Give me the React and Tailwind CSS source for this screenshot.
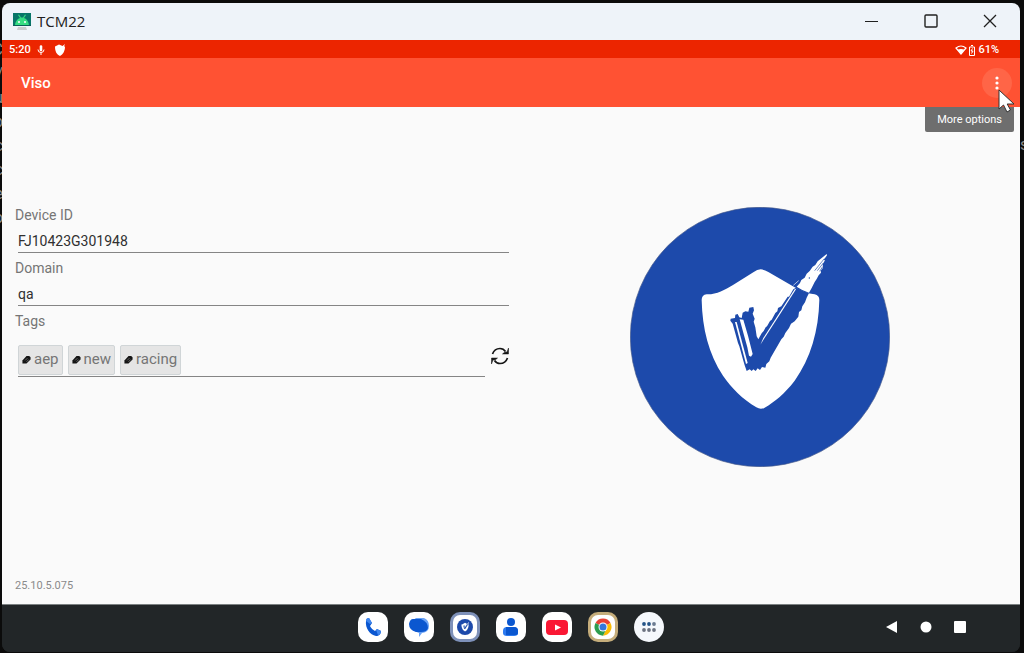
import React from 'react'

const TAGS = ['aep', 'new', 'racing']
const LINES = ['C', '/', 'u', 'b', 'c', 'c', 'e', 'o']

const SHIELD =
  'M418 206 Q430 207 441 214 L520 260 Q550 279 580 281 Q594 284 594 298 C592 390 568 473 520 540 C490 579 460 603 430 621 Q418 628 405 620 C365 596 330 562 305 525 C262 460 243 385 241 298 Q241 283 256 281 C285 282 310 268 335 253 L396 215 Q408 206 418 206Z'

const VisoLogo = ({ className }) => (
  <svg viewBox="26 19 780 780" className={className} role="img" aria-label="Viso">
    <circle cx="416" cy="409" r="389" fill="#1d4aab" stroke="#45598a" strokeWidth="2" />
    <path d={SHIELD} fill="#fff" />
    <path
      d="M411 416 L421 398 427 391 433 380 437 377 446 361 451 357 462 337 468 332 470 322 480 317 499 288 503 288 516 266 524 261 Q544 272 563 277 L556 291 551 305 543 317 540 329 533 334 531 348 520 362 509 369 503 382 492 397 487 408 480 416 448 471 444 482 435 490 432 501 422 499 416 508 409 503 403 511 396 506 391 511 385 506 376 511 370 494 366 480 354 437 350 427 334 369 327 360 328 354 341 352 342 342 349 340 354 350 361 352 364 336 372 332 381 333 384 321 396 319 398 329 394 339 400 354 397 363 402 380 406 407Z"
      fill="#1d4aab"
    />
    <path d="M341 364 L346 364 379 487 374 490Z" fill="#fff" />
    <path d="M355 356 L366 357 380 405 394 460 389 468 383 465 378 440 368 404Z" fill="#fff" />
    <path d="M417 432 L426 412 520 266 525 264 475 342Z" fill="#fff" />
    <path
      d="M526 258 L536 247 540 238 550 231 556 219 565 211 574 198 582 193 589 182 616 160 617 164 607 178 611 179 604 191 605 201 598 210 599 216 592 224 586 235 580 244 571 262 563 276 Q545 271 526 258Z"
      fill="#fff"
    />
    <path d="M580 210 L609 174 M588 210 L606 187 M595 212 L604 198" stroke="#1d4aab" strokeWidth="2" />
    <path d="M516 254 L532 240" stroke="#fff" strokeWidth="2" />
    <circle cx="564" cy="232" r="2" fill="#1d4aab" />
  </svg>
)

const TitleBar = () => (
  <header className="flex h-[37px] items-center bg-[#eef3f9] pb-px pl-[11px] text-[#202020]">
    <svg viewBox="0 0 18 18" className="h-[18px] w-[18px]" aria-hidden="true">
      <path d="M0 1h18v13H0z" fill="#087568" />
      <path d="M2 14c0-4 2-7 5-8L5 3l1-.5 2 3h2l2-3 1 .5-2 3c3 1 5 4 5 8z" fill="#36dc82" />
      <circle cx="6" cy="10" r="1" fill="#fff" />
      <circle cx="12" cy="10" r="1" fill="#fff" />
      <path d="M0 13h18v1H0z" fill="#0b5e57" />
      <path d="M5 15h8l1 3H4z" fill="#c8cbcd" />
    </svg>
    <h1 className="ml-[6px] flex-1 font-['Open_Sans',sans-serif] text-[15px] leading-5">TCM22</h1>
    <button aria-label="Minimize" className="flex h-full w-[59px] items-center justify-center">
      <svg viewBox="0 0 14 14" className="h-[14px] w-[14px]" fill="none" stroke="currentColor">
        <path d="M0 7.500h13" />
      </svg>
    </button>
    <button aria-label="Maximize" className="flex h-full w-[59px] items-center justify-center">
      <svg viewBox="0 0 14 14" className="h-[14px] w-[14px]" fill="none" stroke="currentColor" strokeWidth="1.4">
        <rect x="1" y="1" width="12" height="12" rx="1" />
      </svg>
    </button>
    <button aria-label="Close" className="flex h-full w-[60px] items-center justify-center">
      <svg viewBox="0 0 14 14" className="h-[14px] w-[14px]" fill="none" stroke="currentColor" strokeWidth="1.3">
        <path d="M1 1l12 12M13 1L1 13" />
      </svg>
    </button>
  </header>
)

const StatusBar = () => (
  <div className="flex h-[18px] items-center bg-[#ec2500] pt-[2px] pr-[21px] pl-[7px] text-[11px] leading-4 font-medium text-white">
    <span>5:20</span>
    <svg viewBox="0 0 10 10" className="ml-[5px] h-[10px] w-[10px]" fill="none" stroke="#fff" aria-hidden="true">
      <path d="M5 1.500v3.500" strokeWidth="2.600" strokeLinecap="round" />
      <path d="M2 4.500Q2 7.500 5 7.500Q8 7.500 8 4.500M5 7.500V10" />
    </svg>
    <svg viewBox="0 0 12 12" className="ml-[8px] h-[12px] w-[12px]" fill="#fff" aria-hidden="true">
      <path d="M1 2.500L5 .5L8.500 2L11 0L10 2.500H11C11 7 9 10.500 6 12C2.500 10.500 1 7 1 2.500z" />
    </svg>
    <div className="ml-auto flex items-center">
      <svg viewBox="0 0 12 10" className="h-[10px] w-[12px]" aria-hidden="true">
        <path d="M1 3Q6-1 11 3L6 9z" fill="none" stroke="#fff" strokeWidth="1.2" />
        <path d="M2.500 4.800Q6 3 9.500 4.800L6 9z" fill="#fff" />
      </svg>
      <svg viewBox="0 0 8 11" className="ml-px h-[11px] w-[8px]" fill="none" stroke="#fff" aria-hidden="true">
        <path d="M3 .5h2M1.500 2h5v8.500h-5z" />
        <path d="M4.500 3.500L3 6h2L3.500 8.500" />
      </svg>
      <span className="ml-[2px]">61%</span>
    </div>
  </div>
)

const Cursor = () => (
  <svg viewBox="0 0 17 24" className="absolute top-[21px] left-[16px] z-20 h-[24px] w-[17px]" aria-hidden="true">
    <path d="M1 1v19l4.500-4 3.500 7 3.500-2-3.300-6H16z" fill="#fff" stroke="#333" strokeLinejoin="round" />
  </svg>
)

const AppBar = () => (
  <div className="flex h-[49px] items-center justify-between bg-[#ff5233] pr-[8px] pl-[19px]">
    <h2 className="pt-px text-[15px] font-medium text-white">Viso</h2>
    <div className="relative">
      <button aria-label="More options" className="flex h-[30px] w-[30px] items-center justify-center rounded-full bg-[#ff6547]">
        <svg viewBox="0 0 4 14" className="h-[14px] w-[4px]" fill="#fff">
          <circle cx="2" cy="2" r="1.600" />
          <circle cx="2" cy="7" r="1.600" />
          <circle cx="2" cy="12" r="1.600" />
        </svg>
      </button>
      <div
        role="tooltip"
        className="absolute top-[39px] -right-[2px] z-10 rounded-b-[2px] bg-[#6e6e6e] px-[12px] pt-[5px] pb-[4px] text-[11px] leading-4 whitespace-nowrap text-white"
      >
        More options
      </div>
      <Cursor />
    </div>
  </div>
)

const Field = ({ id, label, value }) => (
  <div>
    <label htmlFor={id} className="block text-[14px] leading-5 text-[#757575]">{label}</label>
    <input
      id={id}
      defaultValue={value}
      className="mx-[3px] h-[28px] w-[calc(100%-6px)] border-b border-[#858585] pt-[5px] text-[14px] text-[#303030] outline-none"
    />
  </div>
)

const TagIcon = () => (
  <svg viewBox="0 0 10 10" className="h-[9px] w-[9px] shrink-0" aria-hidden="true">
    <path d="M.5 9.500V6L5 1H8L9.500 2.500V5L5 9.500z" fill="#151515" />
    <path d="M3.500 6L6 3.500M5 7.500L7.500 5" stroke="#8a8a8a" strokeWidth=".8" />
  </svg>
)

const TagsField = () => (
  <div>
    <label htmlFor="tags" className="block text-[14px] leading-5 text-[#757575]">Tags</label>
    <div className="flex items-center pr-[3px] pl-[3px]">
      <div className="flex min-w-0 flex-1 gap-[5px] border-b border-[#858585] pt-[14px] pb-px">
        {TAGS.map((tag) => (
          <button
            key={tag}
            className="flex h-[30px] items-center gap-[3px] rounded-[2px] border border-[#d0d5d7] bg-[#e5e5e5] px-[3px] text-[15px] text-[#757575]"
          >
            <TagIcon />
            {tag}
          </button>
        ))}
        <input id="tags" className="min-w-0 flex-1 outline-none" />
      </div>
      <button aria-label="Refresh" className="ml-[6px] pt-[4px]">
        <svg viewBox="0 0 18 18" className="h-[18px] w-[18px]" aria-hidden="true">
          <path d="M1.500 7Q3.500 1.500 9 1.500Q12.500 1.500 14.500 4.500M16.500 11Q14.500 16.500 9 16.500Q5.500 16.500 3.500 13.500" fill="none" stroke="#161616" strokeWidth="1.700" />
          <path d="M17.500 1v6h-6l2-1.700 2.500-.3zM.5 17v-6h6l-2 1.700-2.500.3z" fill="#161616" stroke="#161616" strokeWidth=".5" />
        </svg>
      </button>
    </div>
  </div>
)

const PhoneIcon = () => (
  <svg viewBox="0 0 30 30" className="h-full w-full">
    <path d="M8 9c0-2 1-3 3-3l3 5-2 3c1 2 3 4 5 5l2-2 4 2c0 3-2 5-5 5C12 23 7 16 8 9z" fill="#0b57d0" />
    <path d="M8 9c0-2 1-3 3-3l3 5-2 1zM19 17l4 2c0 3-2 4-3 4l-2-5z" fill="#3f86ee" />
  </svg>
)

const MessagesIcon = () => (
  <svg viewBox="0 0 30 30" className="h-full w-full">
    <path d="M12 6h8q5 2 5 8 0 6-7 7l-3 4v-4q-7-2-7-8 0-5 4-7z" fill="#6ba3f5" />
    <path d="M9 7h8q7 3 7 9-1 4-7 4h-5Q5 18 5 12q1-5 4-5z" fill="#0b57d0" />
  </svg>
)

const ContactsIcon = () => (
  <svg viewBox="0 0 30 30" className="h-full w-full">
    <circle cx="15" cy="10" r="4" fill="#0b57d0" />
    <path d="M7 19q0-4 4-4h7q4 0 4 4v2q0 3-4 3h-7q-4 0-4-3z" fill="#2d7bf0" />
    <path d="M10 15h8q4 0 4 4v2q0 2-2 2H10z" fill="#0b57d0" />
  </svg>
)

const YouTubeIcon = () => (
  <svg viewBox="0 0 30 30" className="h-full w-full">
    <rect x="4" y="8" width="22" height="15" rx="4" fill="#fa1734" />
    <path d="M13 12.500v6l6-3z" fill="#fff" />
  </svg>
)

const ChromeIcon = () => (
  <svg viewBox="0 0 24 24" className="h-[18px] w-[18px]">
    <path d="M12 12L2 6.500A11.500 11.500 0 0 1 22 6.500z" fill="#e94235" />
    <path d="M12 12L22 6.500A11.500 11.500 0 0 1 12 23.500L17 14z" fill="#fbbc04" />
    <path d="M2 6.500L12 12 17 14 12 23.500A11.500 11.500 0 0 1 2 6.500z" fill="#2d9d4f" />
    <circle cx="12" cy="12" r="6" fill="#fff" />
    <circle cx="12" cy="12" r="4.700" fill="#3478dc" />
  </svg>
)

const AllAppsIcon = () => (
  <svg viewBox="0 0 30 30" className="h-full w-full">
    {[10, 15, 20].map((x) => (
      <g key={x}>
        <circle cx={x} cy="12" r="1.900" fill={x === 20 ? '#6b7b91' : '#245487'} />
        <circle cx={x} cy="18" r="1.900" fill="#6b7280" />
      </g>
    ))}
  </svg>
)

const APPS = [
  { name: 'Phone', icon: <PhoneIcon />, style: 'rounded-[10px] bg-white' },
  { name: 'Messages', icon: <MessagesIcon />, style: 'rounded-[10px] bg-white' },
  {
    name: 'Viso',
    icon: <span className="flex h-6 w-6 items-center justify-center rounded-[7px] bg-white"><VisoLogo className="h-4 w-4" /></span>,
    style: 'rounded-[10px] bg-[#7e91b9]',
  },
  { name: 'Contacts', icon: <ContactsIcon />, style: 'rounded-[10px] bg-white' },
  { name: 'YouTube', icon: <YouTubeIcon />, style: 'rounded-[10px] bg-white' },
  {
    name: 'Chrome',
    icon: <span className="flex h-6 w-6 items-center justify-center rounded-[7px] bg-white"><ChromeIcon /></span>,
    style: 'rounded-[10px] bg-[#c5ad7b]',
  },
  { name: 'All apps', icon: <AllAppsIcon />, style: 'rounded-full bg-[#f5f8fc]' },
]

const Taskbar = () => (
  <nav className="grid h-[48px] grid-cols-[1fr_auto_1fr] items-center border-t border-[#7b8081] bg-[#222628] pb-[3px]">
    <div />
    <div className="flex gap-[16px]">
      {APPS.map((app) => (
        <button key={app.name} aria-label={app.name} className={`flex h-[30px] w-[30px] items-center justify-center ${app.style}`}>
          {app.icon}
        </button>
      ))}
    </div>
    <div className="flex justify-end gap-[22px] pr-[54px]">
      <button aria-label="Back">
        <svg viewBox="0 0 12 12" className="h-[12px] w-[12px]" fill="#fff"><path d="M0 6L11 0v12z" /></svg>
      </button>
      <button aria-label="Home">
        <svg viewBox="0 0 12 12" className="h-[12px] w-[12px]" fill="#fff"><circle cx="6" cy="6" r="5.500" /></svg>
      </button>
      <button aria-label="Overview">
        <svg viewBox="0 0 12 12" className="h-[12px] w-[12px]" fill="#fff"><rect width="12" height="12" rx="1" /></svg>
      </button>
    </div>
  </nav>
)

export default function App() {
  return (
    <div className="relative flex min-h-screen flex-col bg-[#0b0b0b] pt-[3px] pr-[4px] pb-px pl-[2px] font-[Roboto,sans-serif]">
      {/* window behind this one, only its edges show */}
      <div aria-hidden="true" className="absolute top-[38px] left-0 flex w-[3px] flex-col items-end overflow-hidden text-[16px] leading-6 text-[#8a8a8a]">
        {LINES.map((line, i) => <span key={i}>{line}</span>)}
      </div>
      <div aria-hidden="true" className="absolute top-[133px] right-0 w-[4px] overflow-hidden text-[16px] leading-6 text-[#8a8a8a]">s</div>

      <div className="relative flex flex-1 flex-col overflow-hidden rounded-[8px] bg-[#222628]">
        <TitleBar />
        <StatusBar />
        <AppBar />
        <main className="flex flex-1 flex-col bg-[#fafafa] pr-[12px] pb-[10px] pl-[13px]">
          <div className="grid flex-1 grid-cols-2 content-center items-start pb-[14px]">
            <form className="flex flex-col gap-[5px]">
              <Field id="device-id" label="Device ID" value="FJ10423G301948" />
              <Field id="domain" label="Domain" value="qa" />
              <TagsField />
            </form>
            <VisoLogo className="mt-[2px] h-[260px] w-[260px] justify-self-center" />
          </div>
          <p className="text-[11px] leading-4 text-[#8a8a8a]">25.10.5.075</p>
        </main>
        <Taskbar />
      </div>
    </div>
  )
}
